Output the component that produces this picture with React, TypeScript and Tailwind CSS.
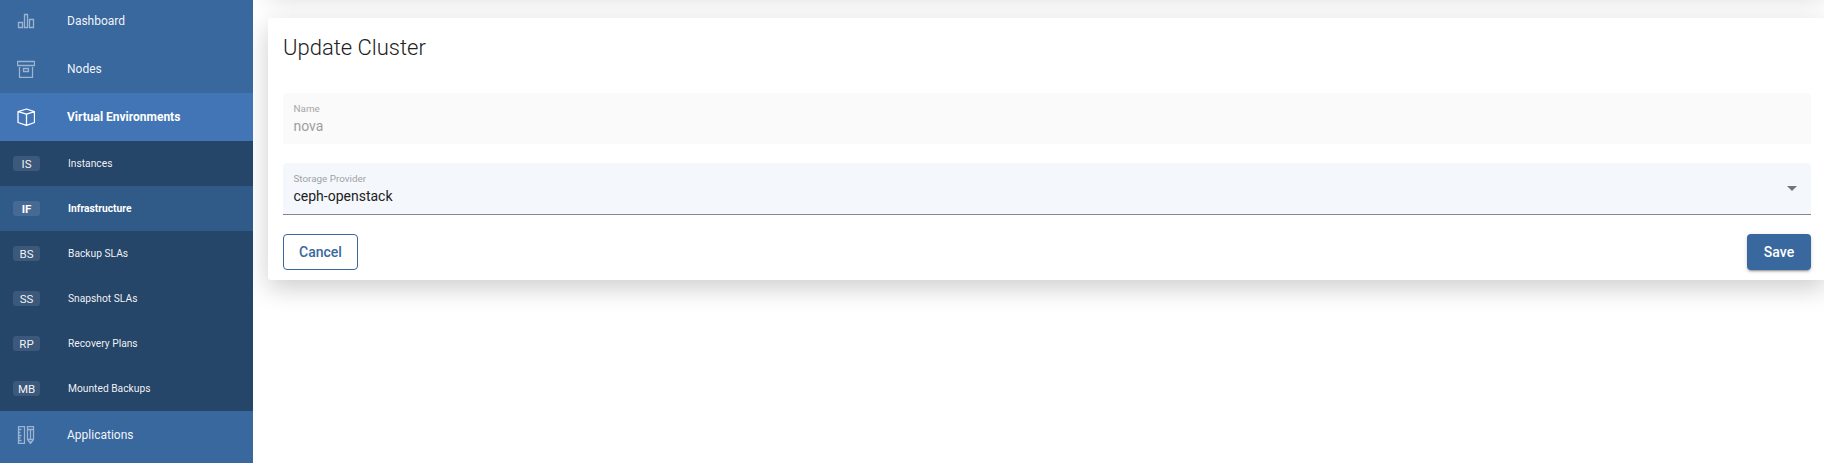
import type { ReactNode } from "react";

const stroke = { fill: "none", stroke: "currentColor", strokeWidth: 1.3 } as const;

const ChartIcon = () => (
  <svg width="18" height="18" viewBox="0 0 18 18" {...stroke}>
    <path d="M1.500 10.500h4v5h-4zM7.500 2.500h3v13h-3zM12.500 7.500h4v8h-4z" />
  </svg>
);

const BoxIcon = () => (
  <svg width="18" height="18" viewBox="0 0 18 18" {...stroke}>
    <path d="M.5 1.500h17v4H.5zM2.500 7v10.500h13V7M6.500 8.500h5v3h-5z" />
  </svg>
);

const CubeIcon = () => (
  <svg width="18" height="18" viewBox="0 0 18 18" {...stroke} strokeLinejoin="round">
    <path d="M9.500 1 17.500 3.600V14.500L9.500 17.400 1 14.500V3.600zM1 3.600 9.500 6.200l8-2.600M9.500 6.200v11" />
  </svg>
);

const ToolsIcon = () => (
  <svg width="18" height="18" viewBox="0 0 18 18" {...stroke}>
    <path d="M1.500.6h6v16.900h-6zM1.500 3.500h3M1.500 6.500h2M1.500 9.500h3M1.500 12h2M1.500 14.500h3M10.500.6h6v12.900l-3 4-3-4zM10.500 3.500h6M10.500 13.500h6M13.500 3.500v10M12.500 16h2" />
  </svg>
);

function MainItem({ icon, label, active }: { icon: ReactNode; label: string; active?: boolean }) {
  return (
    <div
      className={`flex h-12 shrink-0 items-center pl-[17px] text-xs ${
        active ? "bg-[#4175b5] font-bold text-white" : "text-white/95"
      }`}
    >
      <span className={`flex w-[50px] ${active ? "text-white" : "text-[#9bb4d1]"}`}>{icon}</span>
      <span>{label}</span>
    </div>
  );
}

function SubItem({ code, label, active }: { code: string; label: string; active?: boolean }) {
  return (
    <div
      className={`flex h-[45px] shrink-0 items-center pl-[13px] ${
        active ? "bg-[#305a88] font-bold text-white" : "text-white/95"
      }`}
    >
      <span
        className={`mr-7 flex h-[15px] w-[27px] items-center justify-center rounded-[3px] text-[11.5px] leading-4 ${
          active ? "bg-[#476a95]" : "bg-[#3c587a]"
        }`}
      >
        {code}
      </span>
      <span className="text-[10.25px] leading-4">{label}</span>
    </div>
  );
}

const subItems = [
  { code: "IS", label: "Instances" },
  { code: "IF", label: "Infrastructure", active: true },
  { code: "BS", label: "Backup SLAs" },
  { code: "SS", label: "Snapshot SLAs" },
  { code: "RP", label: "Recovery Plans" },
  { code: "MB", label: "Mounted Backups" },
];

const cardShadow = "shadow-[0_8px_26px_0_rgba(0,0,0,0.2)]";

export default function App() {
  return (
    <div className="flex h-[463px] w-full overflow-hidden bg-white font-['Roboto',sans-serif]">
      <nav className="z-10 flex w-[253px] shrink-0 flex-col overflow-hidden bg-[#39689e]">
        <div className="-mt-[3px]">
          <MainItem icon={<ChartIcon />} label="Dashboard" />
        </div>
        <MainItem icon={<BoxIcon />} label="Nodes" />
        <MainItem icon={<CubeIcon />} label="Virtual Environments" active />
        <div className="bg-[#254569]">
          {subItems.map((item) => (
            <SubItem key={item.code} {...item} />
          ))}
        </div>
        <MainItem icon={<ToolsIcon />} label="Applications" />
      </nav>
      <main className="-mr-0.5 flex min-w-0 flex-1 flex-col pl-[15px]">
        <div className={`-mt-[73px] h-[60px] shrink-0 bg-white ${cardShadow}`} />
        <section className={`mt-[31px] h-[262px] rounded-[3px] bg-white px-[15px] ${cardShadow}`}>
          <h1 className="pt-[15px] text-[22px] leading-[30px] font-light text-[#222]">Update Cluster</h1>
          <div className="mt-[30px] h-[51px] rounded-t bg-[#fafafa] px-[10.5px] pt-[10px]">
            <div className="text-[9.85px] leading-3 text-[#a6a6a6]">Name</div>
            <div className="text-sm leading-[22px] text-[#9e9e9e]">nova</div>
          </div>
          <div className="mt-[19px] flex h-[52px] items-center justify-between rounded-t border-b border-[#85888b] bg-[#f4f8fc] pr-[14px] pl-[10.5px]">
            <div className="self-start pt-[10px]">
              <div className="text-[9.85px] leading-3 text-[#a0a2a4]">Storage Provider</div>
              <div className="text-sm leading-[22px] text-[#212121]">ceph-openstack</div>
            </div>
            <svg width="10" height="5" viewBox="0 0 10 5" fill="#737577">
              <path d="M0 0h10L5 5z" />
            </svg>
          </div>
          <div className="mt-[19px] flex justify-between">
            <button className="h-9 w-[75px] rounded border border-[#39689e] text-sm font-medium text-[#39689e]">
              Cancel
            </button>
            <button className="h-9 w-16 rounded bg-[#39689e] text-sm font-medium text-white shadow-[0_3px_1px_-2px_rgba(0,0,0,0.2),0_2px_2px_0_rgba(0,0,0,0.14),0_1px_5px_0_rgba(0,0,0,0.12)]">
              Save
            </button>
          </div>
        </section>
      </main>
    </div>
  );
}
